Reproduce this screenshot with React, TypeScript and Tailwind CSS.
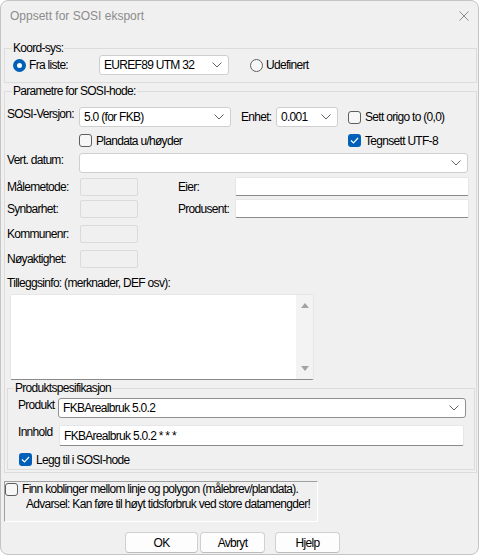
import React from "react";

function Chevron() {
  return (
    <svg width="10" height="6" viewBox="0 0 10 6" className="ml-auto mr-[6px] shrink-0">
      <path d="M0.5 0.5 L5 5 L9.5 0.5" fill="none" stroke="#606060" strokeWidth="1" />
    </svg>
  );
}

function Combo({ w, text, dark }: { w: string; text?: string; dark?: boolean }) {
  return (
    <div
      className={`${w} h-[20px] shrink-0 bg-white border rounded-[3px] flex items-center pl-[4px] ${
        dark ? "border-[#8f8f8f]" : "border-[#cfcfcf]"
      }`}
    >
      <span className="whitespace-nowrap">{text}</span>
      <Chevron />
    </div>
  );
}

function Edit({ w, h, text }: { w: string; h: string; text?: string }) {
  return (
    <div
      className={`${w} ${h} shrink-0 bg-white border border-[#e6e6e6] border-b-[#8a8a8a] rounded-[2px] flex items-center pl-[4px] whitespace-nowrap`}
    >
      {text}
    </div>
  );
}

function Box() {
  return <div className="w-[58px] h-[18px] shrink-0 border border-[#dadada] rounded-[2px]"></div>;
}

function Check({ checked, label }: { checked?: boolean; label: string }) {
  return (
    <div className="flex items-center gap-[4px] whitespace-nowrap">
      {checked ? (
        <div className="w-[13px] h-[13px] rounded-[3px] bg-[#005fb8] flex items-center justify-center shrink-0">
          <svg width="9" height="7" viewBox="0 0 9 7">
            <path d="M1 3.5 L3.5 6 L8 1" fill="none" stroke="white" strokeWidth="1.2" />
          </svg>
        </div>
      ) : (
        <div className="w-[13px] h-[13px] rounded-[3px] border border-[#5e5e5e] bg-[#f7f7f7] shrink-0"></div>
      )}
      <span>{label}</span>
    </div>
  );
}

function Radio({ checked, label }: { checked?: boolean; label: string }) {
  return (
    <div className="flex items-center gap-[3px] whitespace-nowrap">
      {checked ? (
        <div className="w-[13px] h-[13px] rounded-full bg-[#005fb8] flex items-center justify-center shrink-0">
          <div className="w-[5px] h-[5px] rounded-full bg-white"></div>
        </div>
      ) : (
        <div className="w-[13px] h-[13px] rounded-full border border-[#5e5e5e] bg-[#f7f7f7] shrink-0"></div>
      )}
      <span>{label}</span>
    </div>
  );
}

function Btn({ w, label }: { w: string; label: string }) {
  return (
    <div
      className={`${w} h-[21px] bg-[#fdfdfd] border border-[#d0d0d0] border-b-[#bcbcbc] rounded-[4px] flex items-center justify-center`}
    >
      {label}
    </div>
  );
}

export default function App() {
  return (
    <div className="w-[479px] h-[555px] bg-[#f0f0f0] border border-[#c4c4c4] rounded-[8px] flex flex-col overflow-hidden text-[12px] leading-[14px] tracking-[-0.7px] text-black font-['Liberation_Sans',Arial,sans-serif]">
      {/* title bar */}
      <div className="h-[29px] flex items-center pl-[9px] pr-[9px] text-[#8c8c8c] tracking-normal">
        <span>Oppsett for SOSI eksport</span>
        <svg width="10" height="10" viewBox="0 0 10 10" className="ml-auto">
          <path d="M0.5 0.5 L9.5 9.5 M9.5 0.5 L0.5 9.5" stroke="#8c8c8c" strokeWidth="1" />
        </svg>
      </div>

      {/* Koord-sys */}
      <fieldset className="mt-[11px] ml-[3px] mr-[1px] border border-[#dcdcdc] pl-[7px] pb-[7px]">
        <legend className="px-[1px]">Koord-sys:</legend>
        <div className="flex items-center h-[20px] ml-[1px]">
          <div className="w-[86px] shrink-0">
            <Radio checked label="Fra liste:" />
          </div>
          <Combo w="w-[130px]" text="EUREF89 UTM 32" />
          <div className="ml-[21px]">
            <Radio label="Udefinert" />
          </div>
        </div>
      </fieldset>

      {/* Parametre */}
      <fieldset className="mt-[1px] ml-[3px] mr-[1px] border border-[#dcdcdc] pl-[2px] pb-[2px]">
        <legend className="ml-[5px] px-[1px]">Parametre for SOSI-hode:</legend>

        <div className="flex items-start h-[20px] mt-[9px]">
          <span className="w-[72px] shrink-0">SOSI-Versjon:</span>
          <Combo w="w-[152px]" text="5.0 (for FKB)" />
          <span className="ml-[10px] w-[35px] shrink-0 self-center">Enhet:</span>
          <Combo w="w-[62px]" text="0.001" />
          <div className="ml-[10px] self-center">
            <Check label="Sett origo to (0,0)" />
          </div>
        </div>

        <div className="flex items-center h-[13px] mt-[7px] ml-[72px]">
          <div className="w-[269px] shrink-0">
            <Check label="Plandata u/høyder" />
          </div>
          <Check checked label="Tegnsett UTF-8" />
        </div>

        <div className="flex items-start h-[20px] mt-[6px]">
          <span className="w-[72px] shrink-0">Vert. datum:</span>
          <Combo w="w-[389px]" />
        </div>

        <div className="flex items-center h-[19px] mt-[4px]">
          <span className="w-[73px] shrink-0">Målemetode:</span>
          <Box />
          <span className="ml-[40px] w-[57px] shrink-0">Eier:</span>
          <Edit w="w-[234px]" h="h-[19px]" />
        </div>
        <div className="flex items-center h-[19px] mt-[3px]">
          <span className="w-[73px] shrink-0">Synbarhet:</span>
          <Box />
          <span className="ml-[40px] w-[57px] shrink-0">Produsent:</span>
          <Edit w="w-[234px]" h="h-[19px]" />
        </div>
        <div className="flex items-center h-[19px] mt-[6px]">
          <span className="w-[73px] shrink-0">Kommunenr:</span>
          <Box />
        </div>
        <div className="flex items-center h-[19px] mt-[6px]">
          <span className="w-[73px] shrink-0">Nøyaktighet:</span>
          <Box />
        </div>

        <div className="mt-[8px]">Tilleggsinfo: (merknader, DEF osv):</div>
        <div className="mt-[4px] ml-[3px] w-[304px] h-[86px] bg-white border border-[#e6e6e6] border-b-[#8a8a8a] rounded-[2px] flex">
          <div className="flex-1"></div>
          <div className="w-[17px] bg-[#f3f3f3] flex flex-col items-center justify-between py-[8px]">
            <svg width="8" height="5" viewBox="0 0 8 5">
              <path d="M0 5 L4 0 L8 5 Z" fill="#a3a3a3" />
            </svg>
            <svg width="8" height="5" viewBox="0 0 8 5">
              <path d="M0 0 L4 5 L8 0 Z" fill="#a3a3a3" />
            </svg>
          </div>
        </div>

        {/* Produktspesifikasjon */}
        <fieldset className="mt-[1px] mr-[1px] border border-[#dcdcdc] pl-[10px] pb-[3px]">
          <legend className="-ml-[4px] px-[1px]">Produktspesifikasjon</legend>
          <div className="flex items-start h-[20px] mt-[3px]">
            <span className="w-[40px] shrink-0">Produkt</span>
            <Combo w="w-[408px]" text="FKBArealbruk 5.0.2" dark />
          </div>
          <div className="flex items-start h-[21px] mt-[7px]">
            <span className="w-[41px] shrink-0">Innhold</span>
            <Edit w="w-[405px]" h="h-[21px]" text="FKBArealbruk 5.0.2 * * *" />
          </div>
          <div className="mt-[7px] ml-[1px] h-[13px] flex items-center">
            <Check checked label="Legg til i SOSI-hode" />
          </div>
        </fieldset>
      </fieldset>

      {/* Finn koblinger */}
      <div className="mt-[8px] ml-[3px] w-[314px] h-[41px] border border-[#a0a0a0] border-r-white border-b-white flex items-start">
        <div className="mt-[1px] w-[13px] h-[13px] rounded-[3px] border border-[#5e5e5e] bg-[#f7f7f7] shrink-0"></div>
        <div className="ml-[4px] leading-[15px] whitespace-nowrap">
          <div>Finn koblinger mellom linje og polygon (målebrev/plandata).</div>
          <div className="ml-[4px]">Advarsel: Kan føre til høyt tidsforbruk ved store datamengder!</div>
        </div>
      </div>

      {/* buttons */}
      <div className="mt-[10px] ml-[124px] flex">
        <Btn w="w-[73px]" label="OK" />
        <div className="ml-[2px]">
          <Btn w="w-[65px]" label="Avbryt" />
        </div>
        <div className="ml-[10px]">
          <Btn w="w-[65px]" label="Hjelp" />
        </div>
      </div>
    </div>
  );
}
